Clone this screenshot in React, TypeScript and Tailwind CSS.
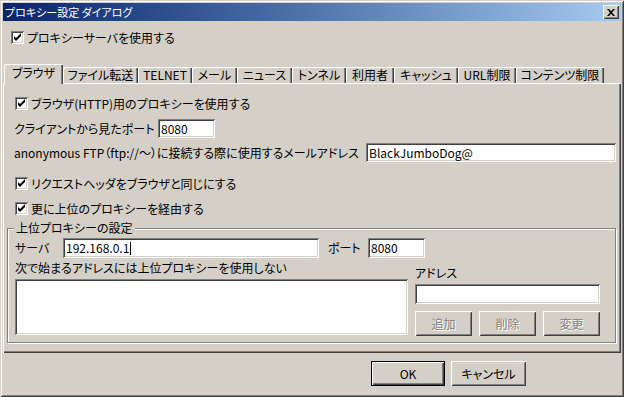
import React from "react";

const raised =
  "shadow-[inset_1px_1px_#ffffff,inset_-1px_-1px_#404040,inset_2px_2px_#d4d0c8,inset_-2px_-2px_#808080]";
const sunken =
  "shadow-[inset_1px_1px_#808080,inset_-1px_-1px_#ffffff,inset_2px_2px_#404040,inset_-2px_-2px_#d4d0c8]";

function Check() {
  return (
    <span className={`w-[13px] h-[13px] bg-white shrink-0 flex items-center justify-center ${sunken}`}>
      <svg width="7" height="7" viewBox="0 0 7 7" className="overflow-visible">
        <polygon points="0,2 2,4 7,-1 7,2 2,7 0,5" fill="#000" />
      </svg>
    </span>
  );
}

function CheckRow({ label, className }: { label: string; className: string }) {
  return (
    <div className={`flex items-center h-[13px] gap-[3px] ${className}`}>
      <Check />
      <span className="whitespace-nowrap">{label}</span>
    </div>
  );
}

function Field({ value, className, caret }: { value?: string; className: string; caret?: boolean }) {
  return (
    <div className={`bg-white shrink-0 flex items-center pl-[3px] ${sunken} ${className}`}>
      <span>{value}</span>
      {caret && <span className="w-[1px] h-[13px] bg-black ml-[1px]" />}
    </div>
  );
}

const tabs: { label: string; w: string }[] = [
  { label: "ファイル転送", w: "w-[75px]" },
  { label: "TELNET", w: "w-[54px]" },
  { label: "メール", w: "w-[45px]" },
  { label: "ニュース", w: "w-[55px]" },
  { label: "トンネル", w: "w-[54px]" },
  { label: "利用者", w: "w-[48px]" },
  { label: "キャッシュ", w: "w-[64px]" },
  { label: "URL制限", w: "w-[58px]" },
  { label: "コンテンツ制限", w: "w-[88px]" },
];

function DisabledButton({ label }: { label: string }) {
  return (
    <div
      className={`w-[57px] h-[25px] bg-[#d4d0c8] flex items-center justify-center text-[#808080] [text-shadow:1px_1px_#ffffff] ${raised}`}
    >
      {label}
    </div>
  );
}

export default function App() {
  return (
    <div className="w-[624px] h-[397px] bg-[#d4d0c8] p-[3px] flex flex-col font-['Noto_Sans_CJK_JP',sans-serif] text-[12px] leading-[14px] text-black [font-feature-settings:'palt'] shadow-[inset_1px_1px_#d4d0c8,inset_-1px_-1px_#404040,inset_2px_2px_#ffffff,inset_-2px_-2px_#808080]">
      {/* Title bar */}
      <div className="h-[18px] shrink-0 flex items-center justify-between bg-gradient-to-r from-[#0a246a] to-[#a6caf0] pl-[2px] pr-[2px]">
        <span className="text-white text-[11px] whitespace-nowrap">プロキシー設定 ダイアログ</span>
        <div className={`w-[16px] h-[14px] bg-[#d4d0c8] flex items-center justify-center ${raised}`}>
          <svg width="8" height="7" viewBox="0 0 8 7">
            <path d="M0 0h2l2 2.3 2-2.3h2l-3 3.5 3 3.5h-2l-2-2.3-2 2.3h-2l3-3.5z" fill="#000" />
          </svg>
        </div>
      </div>

      {/* Use proxy */}
      <CheckRow label="プロキシーサーバを使用する" className="mt-[10px] ml-[8px]" />

      {/* Tabs */}
      <div className="flex items-end h-[20px] mt-[20px] ml-[1px] relative z-10">
        <div className="w-[59px] h-[20px] bg-[#d4d0c8] flex items-center justify-center pb-[2px] shadow-[inset_1px_1px_#ffffff,inset_-1px_0_#404040,inset_-2px_0_#808080] rounded-tl-[2px]">
          ブラウザ
        </div>
        {tabs.map((t) => (
          <div
            key={t.label}
            className={`${t.w} h-[16px] mb-[1px] bg-[#d4d0c8] flex items-center justify-center whitespace-nowrap shadow-[inset_1px_1px_#ffffff,inset_-1px_0_#404040,inset_-2px_0_#808080] rounded-tl-[2px]`}
          >
            {t.label}
          </div>
        ))}
      </div>

      {/* Tab panel */}
      <div className="h-[270px] -mt-[1px] flex flex-col shrink-0 shadow-[inset_1px_1px_#ffffff,inset_-1px_-1px_#404040,inset_-2px_-2px_#808080]">
        <CheckRow label="ブラウザ(HTTP)用のプロキシーを使用する" className="mt-[14px] ml-[12px]" />

        <div className="flex items-center mt-[9px] ml-[11px]">
          <span className="w-[144px] whitespace-nowrap">クライアントから見たポート</span>
          <Field value="8080" className="w-[57px] h-[19px]" />
        </div>

        <div className="flex items-center mt-[5px] ml-[11px]">
          <span className="w-[352px] whitespace-nowrap">
            anonymous FTP（ftp://～）に接続する際に使用するメールアドレス
          </span>
          <Field value="BlackJumboDog@" className="w-[250px] h-[19px]" />
        </div>

        <CheckRow label="リクエストヘッダをブラウザと同じにする" className="mt-[15px] ml-[12px]" />
        <CheckRow label="更に上位のプロキシーを経由する" className="mt-[12px] ml-[12px]" />

        {/* Group box */}
        <div className="relative ml-[4px] mt-[13px] w-[609px] h-[115px] border border-[#808080] shadow-[inset_1px_1px_#ffffff,1px_1px_#ffffff] flex flex-col">
          <span className="absolute -top-[8px] left-[6px] px-[2px] bg-[#d4d0c8] whitespace-nowrap">
            上位プロキシーの設定
          </span>
          <div className="flex items-center mt-[9px] ml-[7px] h-[20px]">
            <span className="w-[48px] whitespace-nowrap">サーバ</span>
            <Field value="192.168.0.1" caret className="w-[256px] h-[20px]" />
            <span className="w-[40px] ml-[9px] whitespace-nowrap">ポート</span>
            <Field value="8080" className="w-[57px] h-[20px]" />
          </div>
          <div className="flex items-start">
            <div className="flex flex-col ml-[7px]">
              <span className="mt-[3px] whitespace-nowrap">次で始まるアドレスには上位プロキシーを使用しない</span>
              <div className={`mt-[4px] w-[393px] h-[56px] bg-white ${sunken}`} />
            </div>
            <div className="flex flex-col ml-[7px]">
              <span className="mt-[8px] whitespace-nowrap">アドレス</span>
              <Field className="mt-[4px] w-[185px] h-[20px]" />
              <div className="flex gap-[7px] mt-[7px]">
                <DisabledButton label="追加" />
                <DisabledButton label="削除" />
                <DisabledButton label="変更" />
              </div>
            </div>
          </div>
        </div>
      </div>

      {/* Bottom buttons */}
      <div className="flex mt-[8px] ml-[368px] gap-[6px]">
        <div className="w-[74px] h-[25px] bg-[#d4d0c8] border border-black flex items-center justify-center shadow-[inset_1px_1px_#ffffff,inset_-1px_-1px_#404040,inset_-2px_-2px_#808080]">
          OK
        </div>
        <div className={`w-[75px] h-[25px] bg-[#d4d0c8] flex items-center justify-center ${raised}`}>
          キャンセル
        </div>
      </div>
    </div>
  );
}
